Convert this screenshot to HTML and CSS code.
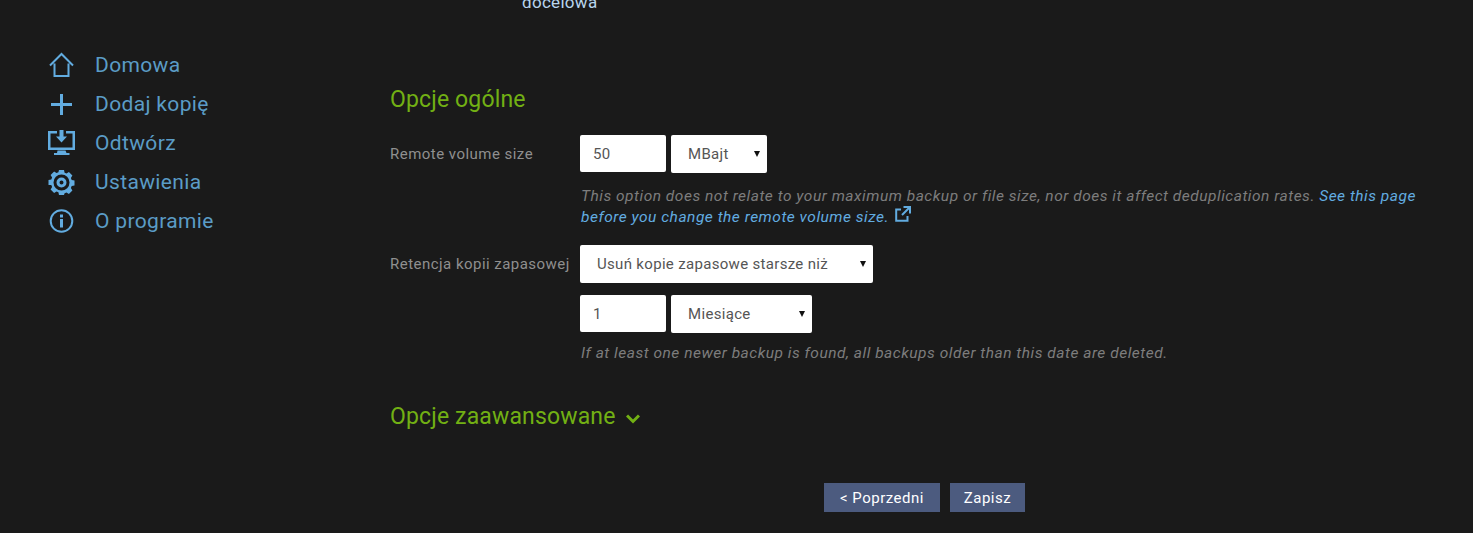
FILE: index.html
```html
<!DOCTYPE html>
<html lang="pl">
<head>
<meta charset="utf-8">
<title>Opcje</title>
<link rel="stylesheet" href="styles.css">
</head>
<body>
<div class="clip"><span class="step">docelowa</span></div>
<div class="layout">
  <nav class="side">
    <a class="nav"><svg class="ico" viewBox="0 0 28 28"><path d="M3 14.500 14.500 3 26 14.500M7.500 12.500v12.500h14V12.500" fill="none" stroke="currentColor" stroke-width="2"/></svg>Domowa</a>
    <a class="nav"><svg class="ico" viewBox="0 0 28 28"><path d="M14.500 4v21M4 14.500h21" fill="none" stroke="currentColor" stroke-width="3"/></svg>Dodaj kopię</a>
    <a class="nav"><svg class="ico" viewBox="0 0 28 28"><path fill-rule="evenodd" fill="currentColor" d="M1 2h9v2.500H3.500v14h22v-14H19V2h9v19H1zM12.500 1h4v6.500h3.500l-5.500 6-5.500-6h3.500zM10.500 21.500h8l1 2.500h3v2H7v-2h3z"/></svg>Odtwórz</a>
    <a class="nav"><svg class="ico" viewBox="0 0 28 28"><path fill-rule="evenodd" fill="currentColor" d="M12 2h5l.6 2.800 1.900.8 2.400-1.500 3.500 3.500-1.500 2.400.8 1.900 2.800.6v5l-2.800.6-.8 1.900 1.500 2.400-3.500 3.500-2.400-1.500-1.900.8L17 27h-5l-.6-2.800-1.900-.8-2.400 1.500-3.500-3.500 1.500-2.400-.8-1.900L1.500 17v-5l2.800-.6.8-1.900-1.500-2.400 3.500-3.500 2.400 1.500 1.900-.8zM14.500 6.500a8 8 0 1 0 0 16 8 8 0 0 0 0-16zm0 3a5 5 0 1 1 0 10 5 5 0 0 1 0-10zm0 3a2 2 0 1 0 0 4 2 2 0 0 0 0-4z"/></svg>Ustawienia</a>
    <a class="nav"><svg class="ico" viewBox="0 0 28 28"><circle cx="14.500" cy="14" r="10.800" fill="none" stroke="currentColor" stroke-width="2"/><path fill="currentColor" d="M13 7.500h3v3h-3zM13 12h3v8.500h-3z"/></svg>O programie</a>
  </nav>
  <main class="content">
    <h2 class="title">Opcje ogólne</h2>
    <div class="row">
      <label class="lab">Remote volume size</label>
      <input class="field num" value="50">
      <span class="sel w96"><select class="field"><option>MBajt</option></select></span>
    </div>
    <p class="hint">This option does not relate to your maximum backup or file size, nor does it affect deduplication rates. <a class="link">See this page before you change the remote volume size.</a> <svg class="ext" viewBox="0 0 16 16"><path d="M6 3.500H1.200v11.300h11.300V10M8.500 1H15v6.500M15 1 7 9" fill="none" stroke="currentColor" stroke-width="2"/></svg></p>
    <div class="row r2">
      <label class="lab">Retencja kopii zapasowej</label>
      <span class="sel w293"><select class="field"><option>Usuń kopie zapasowe starsze niż</option></select></span>
    </div>
    <div class="row r3">
      <span class="lab"></span>
      <input class="field num" value="1">
      <span class="sel w141"><select class="field"><option>Miesiące</option></select></span>
    </div>
    <p class="hint h2">If at least one newer backup is found, all backups older than this date are deleted.</p>
    <h2 class="title adv">Opcje zaawansowane <svg class="chev" viewBox="0 0 14 10"><path d="M1 1.500 7 7.500l6-6" fill="none" stroke="currentColor" stroke-width="3"/></svg></h2>
    <div class="btns">
      <button class="btn b1">&lt; Poprzedni</button>
      <button class="btn b2">Zapisz</button>
    </div>
  </main>
</div>
</body>
</html>
```
FILE: styles.css
```css
* { box-sizing: border-box; }
html, body { margin: 0; height: 533px; overflow: hidden; }
body { background: #1a1a1a; font-family: Roboto, sans-serif; color: #8f8f8f; }
.clip { height: 12px; overflow: hidden; padding-left: 522px; display: flex; align-items: flex-end; }
.step { font-size: 17px; letter-spacing: .3px; line-height: 20px; color: #b9d6ee; height: 20px; flex: none; }
.layout { display: flex; }
.side { width: 390px; flex: none; padding: 33px 0 0 47px; display: flex; flex-direction: column; }
.nav { display: flex; align-items: center; height: 39px; font-size: 21px; letter-spacing: .35px; color: #5b9cc6; }
.ico { width: 28px; height: 28px; margin-right: 20px; color: #62ace0; flex: none; }
.content { flex: 1; min-width: 0; padding-top: 72px; }
.title { margin: 0; font-size: 23px; font-weight: 400; letter-spacing: .15px; line-height: 32px; color: #72b014; }
.row { display: flex; align-items: flex-start; height: 38px; }
.row:first-of-type { margin-top: 19px; }
.lab { width: 190px; flex: none; align-self: center; font-size: 15px; letter-spacing: .47px; color: #8f8f8f; }
.field { display: block; width: 100%; height: 100%; padding: 0 13px; border: 0; border-radius: 2px; background: #fff; color: #555; font: 15px Roboto, sans-serif; letter-spacing: .32px; appearance: none; outline: 0; }
.num { width: 86px; height: 37px; margin-right: 5px; }
.sel { position: relative; display: block; height: 38px; }
.sel select { padding-left: 17px; }
.sel::after { content: ""; position: absolute; right: 7px; top: 16px; border: 3.500px solid transparent; border-top: 6px solid #111; border-bottom: 0; }
.w96 { width: 96px; }
.w293 { width: 293px; }
.w141 { width: 141px; }
.hint { margin: 13px 0 0 191px; width: 850px; font-size: 15.500px; letter-spacing: .51px; font-style: italic; line-height: 21px; color: #7d7d7d; }
.link { color: #62ace0; }
.ext { width: 16px; height: 16px; margin: -4px 0 0 2px; color: #62ace0; vertical-align: 0; }
.r2 { margin-top: 17px; }
.r3 { margin-top: 12px; }
.h2 { margin-top: 10px; }
.adv { margin-top: 37px; }
.chev { width: 14px; height: 10px; margin-left: 5px; }
.btns { display: flex; gap: 10px; margin: 50px 0 0 434px; }
.btn { height: 29px; border: 0; background: #4c5b7f; color: #fff; font: 15px Roboto, sans-serif; letter-spacing: .5px; padding: 0; }
.b1 { width: 116px; }
.b2 { width: 75px; }
```
